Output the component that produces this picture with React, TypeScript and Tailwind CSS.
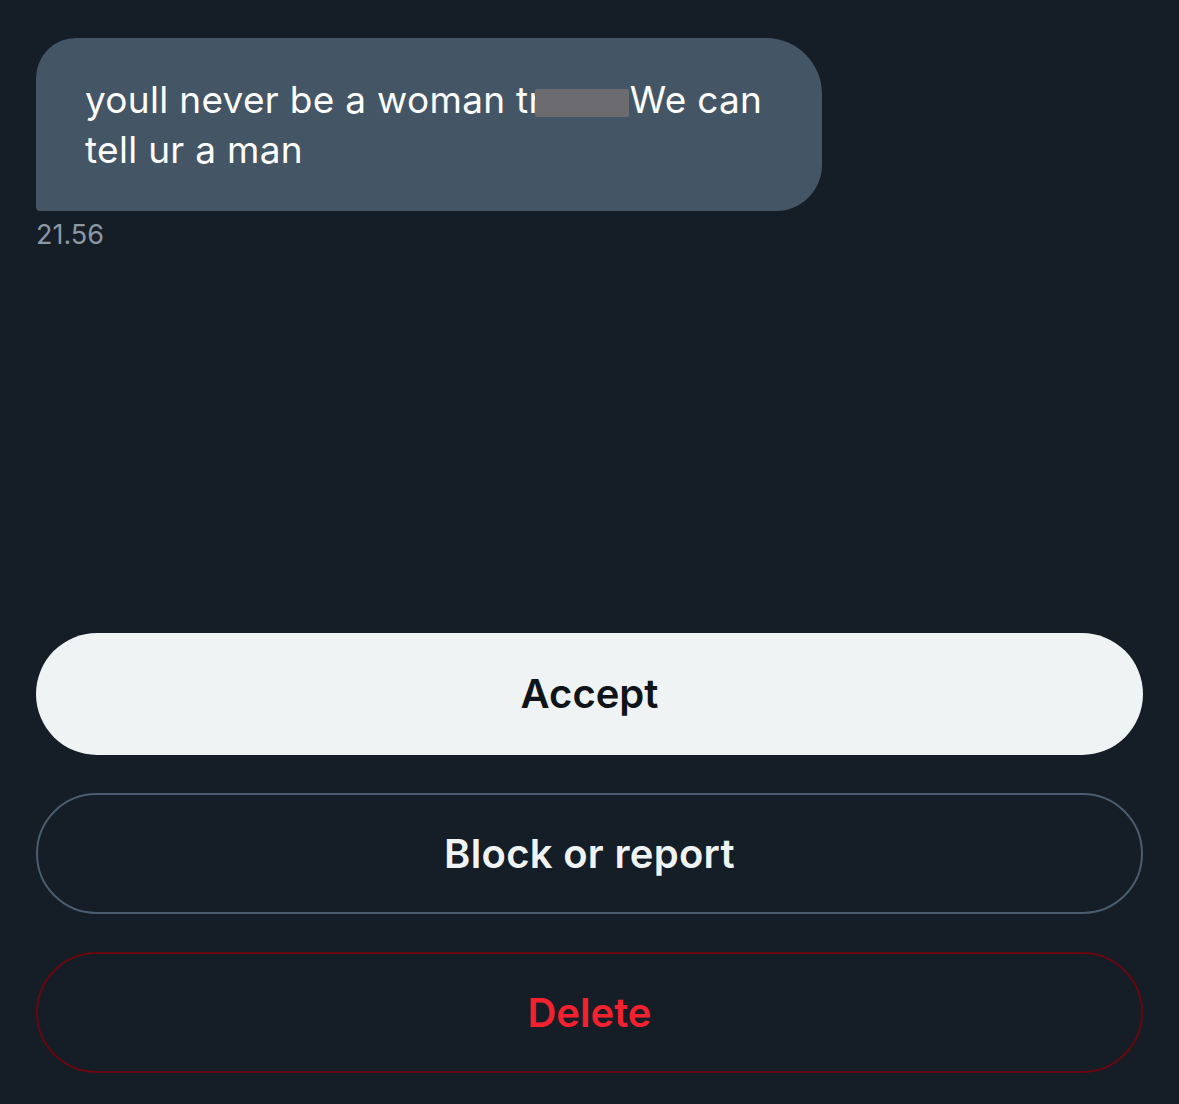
const font = { fontFamily: 'Inter, "Liberation Sans", sans-serif' }

const App = () => {
  return (
    <div
      className="h-[1104px] w-full bg-[#151d27] flex flex-col px-[36px] pt-[38px] pb-[31px]"
      style={font}
    >
      {/* message */}
      <div className="w-[786px] bg-[#445566] rounded-[40px] rounded-tr-[56px] rounded-br-[46px] rounded-bl-[4px] pl-[49px] pr-[40px] pt-[37px] pb-[36px]">
        <p className="text-[37px] leading-[50px] tracking-[0.3px] text-white">
          youll never be a woman tr
          {/* redacted word, covers most of the "r" like the screenshot */}
          <span className="inline-block align-middle w-[94px] h-[28px] bg-[#6c6c70] -ml-[8px] mr-[1px] rounded-[2px]" />
          We can tell ur a man
        </p>
      </div>
      <div className="mt-[8px] text-[27px] leading-[32px] text-[#8b98a5]">21.56</div>

      <div className="flex-1" />

      {/* actions */}
      <div className="flex flex-col gap-[38px]">
        <button className="h-[122px] w-full rounded-full bg-[#eff3f4] text-[#0f1419] text-[40px] font-semibold">
          Accept
        </button>
        <button className="h-[121px] w-full rounded-full border-2 border-[#4a5c6e] text-[#eff3f4] text-[40px] font-semibold tracking-[0.3px]">
          Block or report
        </button>
        <button className="h-[121px] w-full rounded-full border-2 border-[#67070f] text-[#f4212e] text-[40px] font-semibold">
          Delete
        </button>
      </div>
    </div>
  )
}

export default App
